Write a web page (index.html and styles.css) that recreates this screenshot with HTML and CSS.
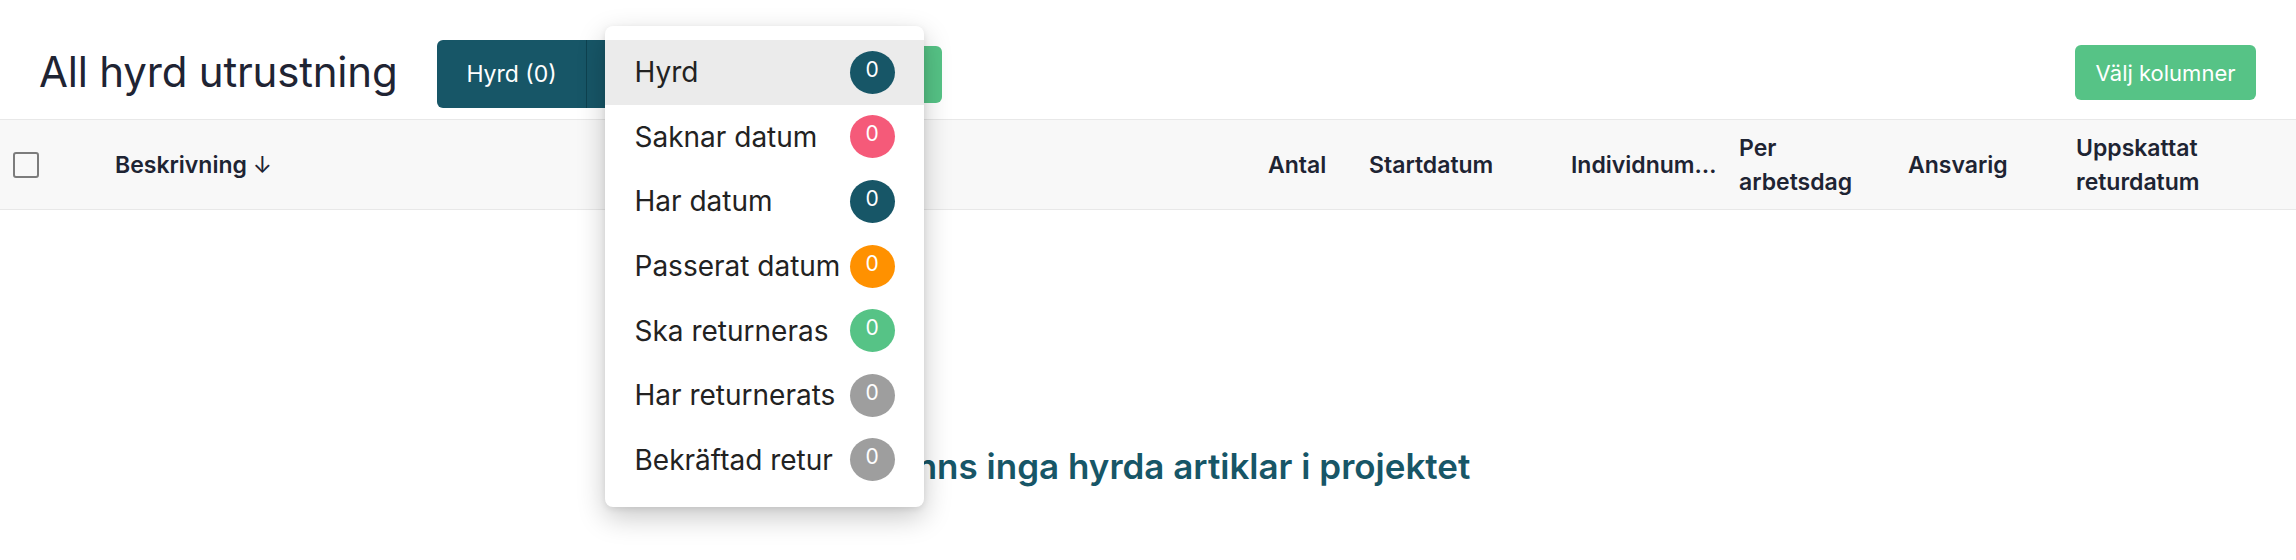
FILE: index.html
```html
<!DOCTYPE html>
<html lang="sv">
<head>
<meta charset="utf-8">
<title>All hyrd utrustning</title>
<link rel="stylesheet" href="styles.css">
</head>
<body>
<div class="page">
  <header class="toolbar">
    <h1 class="title">All hyrd utrustning</h1>
    <div class="filter-group">
      <button class="btn btn-teal btn-main">Hyrd (0)</button>
      <button class="btn btn-teal btn-toggle"></button>
      <button class="btn btn-green btn-hidden">Ska returneras (0)</button>
      <ul class="menu">
        <li class="menu-item active"><span>Hyrd</span><span class="badge teal">0</span></li>
        <li class="menu-item"><span>Saknar datum</span><span class="badge pink">0</span></li>
        <li class="menu-item"><span>Har datum</span><span class="badge teal">0</span></li>
        <li class="menu-item"><span>Passerat datum</span><span class="badge orange">0</span></li>
        <li class="menu-item"><span>Ska returneras</span><span class="badge green">0</span></li>
        <li class="menu-item"><span>Har returnerats</span><span class="badge grey">0</span></li>
        <li class="menu-item"><span>Bekräftad retur</span><span class="badge grey">0</span></li>
      </ul>
    </div>
    <button class="btn btn-green btn-columns">Välj kolumner</button>
  </header>

  <div class="table-head">
    <div class="cell cell-check"><span class="checkbox"></span></div>
    <div class="cell">Beskrivning <span class="arrow">↓</span></div>
    <div class="cell">Antal</div>
    <div class="cell">Startdatum</div>
    <div class="cell"><span class="ellipsis">Individnummer</span></div>
    <div class="cell cell-wrap">Per arbetsdag</div>
    <div class="cell">Ansvarig</div>
    <div class="cell cell-wrap">Uppskattat returdatum</div>
  </div>

  <div class="empty">Det finns inga hyrda artiklar i projektet</div>
</div>
</body>
</html>
```

FILE: styles.css
```css
* { box-sizing: border-box; }

html, body {
  margin: 0;
  padding: 0;
  background: #ffffff;
}

body {
  font-family: Inter, "Noto Sans", "Liberation Sans", sans-serif;
  color: #1f2433;
}

.page {
  width: 2296px;
  height: 560px;
  overflow: hidden;
}

.toolbar {
  display: flex;
  align-items: center;
  height: 119px;
  padding: 40px 40px 11px 39px;
}

.title {
  margin: 0 39px 4px 0;
  font-size: 42px;
  font-weight: 400;
  letter-spacing: -0.2px;
  color: #1f2433;
  line-height: 1;
}

.filter-group {
  position: relative;
  display: flex;
  align-items: center;
}

.btn {
  border: 0;
  font-family: Inter, "Noto Sans", "Liberation Sans", sans-serif;
  font-size: 22px;
  color: #ffffff;
  cursor: pointer;
}

.btn-teal {
  background: #175667;
  height: 68px;
}

.btn-main {
  width: 150px;
  border-radius: 6px 0 0 6px;
  border-right: 1px solid #0e4250;
  padding: 0 0 0 1px;
  font-size: 23px;
}

.btn-toggle {
  width: 60px;
}

.btn-green {
  background: #56c386;
  height: 57px;
  border-radius: 6px;
}

.btn-hidden {
  width: 295px;
  border-radius: 0 6px 6px 0;
}

.btn-columns {
  margin-left: auto;
  margin-bottom: 3px;
  width: 181px;
  height: 55px;
  padding: 0;
}

.menu {
  position: absolute;
  left: 168px;
  top: -14px;
  width: 319px;
  margin: 0;
  padding: 14px 0 15px;
  list-style: none;
  background: #ffffff;
  border-radius: 8px;
  box-shadow: 0 10px 28px rgba(0, 0, 0, 0.22), 0 2px 6px rgba(0, 0, 0, 0.08);
  z-index: 10;
}

.menu-item {
  display: flex;
  align-items: center;
  justify-content: space-between;
  height: 64.6px;
  padding: 0 29px 0 30px;
  font-size: 28px;
  color: #222222;
}

.menu-item.active {
  background: #ebebeb;
}

.badge {
  display: flex;
  align-items: center;
  justify-content: center;
  width: 45px;
  height: 43px;
  border-radius: 50%;
  font-size: 21px;
  color: #ffffff;
  padding-bottom: 6px;
}

.teal { background: #175667; }
.pink { background: #f55a79; }
.orange { background: #ff9100; }
.green { background: #56c386; }
.grey { background: #9e9e9e; }

.table-head {
  display: grid;
  grid-template-columns: 102px 1153px 101px 202px 168px 169px 168px 1fr;
  align-items: center;
  height: 91px;
  padding-left: 13px;
  background: #f8f8f8;
  border-top: 1px solid #e8e8e8;
  border-bottom: 1px solid #e8e8e8;
  font-size: 23px;
  font-weight: 600;
  line-height: 34px;
  color: #1e2433;
}

.cell-check {
  display: flex;
  align-items: center;
}

.checkbox {
  display: block;
  width: 26px;
  height: 26px;
  border: 2px solid #7c7c7c;
  border-radius: 3px;
  background: #f8f8f8;
}

.arrow {
  font-weight: 400;
}

.ellipsis {
  display: block;
  width: 150px;
  white-space: nowrap;
  overflow: hidden;
  text-overflow: ellipsis;
}

.cell-wrap {
  padding-right: 30px;
}

.table-head .cell:nth-child(6) {
  padding-right: 40px;
}

.table-head .cell:nth-child(8) {
  padding-right: 60px;
}

.empty {
  margin-top: 235px;
  text-align: center;
  font-size: 35px;
  line-height: 42px;
  font-weight: 600;
  color: #175667;
}
```
